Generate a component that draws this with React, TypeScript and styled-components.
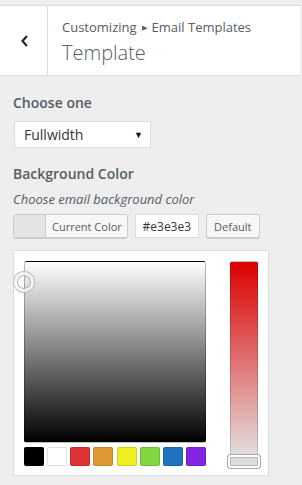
import styled, { createGlobalStyle } from 'styled-components';

const Global = createGlobalStyle`
  html, body {
    margin: 0;
    padding: 0;
    background: #eeeeee;
    font-family: "Open Sans", "Noto Sans", sans-serif;
    color: #555d66;
  }
`;

const Panel = styled.div`
  position: relative;
  width: 300px;
  height: 485px;
  overflow: hidden;
`;

const ScrollThumb = styled.div`
  position: absolute;
  top: 30px;
  left: 301px;
  width: 1px;
  height: 100px;
  background: #555;
`;

const Header = styled.header`
  margin-top: 5px;
  display: flex;
  height: 69px;
  background: #fff;
  border-top: 1px solid #dddddd;
  border-bottom: 1px solid #dddddd;
`;

const BackButton = styled.button`
  width: 48px;
  flex: none;
  display: flex;
  align-items: center;
  justify-content: center;
  padding: 0 0 0 2px;
  background: #fff;
  border: 0;
  border-right: 1px solid #dddddd;
  color: #23282d;
`;

const TitleBlock = styled.div`
  display: flex;
  flex-direction: column;
  padding: 11px 0 0 14px;
`;

const Crumbs = styled.span`
  font-size: 13px;
  line-height: 20px;
  color: #555d66;
  .sep {
    font-size: 7px;
    vertical-align: 2px;
    margin: 0 5px 0 5px;
  }
`;

const Title = styled.h1`
  margin: 0;
  font-size: 20px;
  font-weight: 300;
  line-height: 30px;
  color: #555d66;
`;

const Content = styled.div`
  padding: 17px 13px 0 13px;
`;

const Label = styled.div`
  font-size: 14px;
  font-weight: 600;
  line-height: 20px;
  color: #555d66;
`;

const Select = styled.div`
  margin: 8px 0 0 1px;
  width: 137px;
  height: 27px;
  box-sizing: border-box;
  background: #fff;
  border: 1px solid #dddddd;
  display: flex;
  align-items: center;
  justify-content: space-between;
  padding: 0 7px 0 9px;
  font-size: 14px;
  color: #32373c;
  .arrow {
    font-size: 9px;
    color: #111;
  }
`;

const Section = styled.div`
  margin-top: 16px;
`;

const Description = styled.div`
  margin-top: 6px;
  font-size: 13px;
  font-style: italic;
  line-height: 18px;
  color: #555d66;
`;

const ControlRow = styled.div`
  margin-top: 6px;
  display: flex;
  gap: 7px;
  height: 24px;
`;

const ColorResult = styled.div`
  display: flex;
  height: 24px;
  box-sizing: border-box;
  border: 1px solid #cccccc;
  border-radius: 3px;
  overflow: hidden;
  box-shadow: 0 1px 0 #cccccc;
`;

const Swatch = styled.span<{ $color: string }>`
  width: 31px;
  background: ${({ $color }) => $color};
  border-right: 1px solid #cccccc;
`;

const SmallButton = styled.span`
  display: flex;
  align-items: center;
  padding: 0 5px 0 6px;
  background: #f7f7f7;
  font-size: 11px;
  color: #555d66;
`;

const HexInput = styled.div`
  width: 64px;
  box-sizing: border-box;
  background: #fff;
  border: 1px solid #dddddd;
  display: flex;
  align-items: center;
  justify-content: center;
  font-size: 12px;
  color: #32373c;
`;

const DefaultButton = styled.div`
  width: 54px;
  box-sizing: border-box;
  border: 1px solid #cccccc;
  border-radius: 3px;
  background: #f7f7f7;
  box-shadow: 0 1px 0 #cccccc;
  display: flex;
  align-items: center;
  justify-content: center;
  font-size: 11px;
  color: #555d66;
`;

const Picker = styled.div`
  margin-top: 12px;
  width: 256px;
  height: 226px;
  box-sizing: border-box;
  background: #fff;
  border: 1px solid #dddddd;
  padding: 10px 10px 0 10px;
  display: flex;
  gap: 24px;
`;

const PickerLeft = styled.div`
  display: flex;
  flex-direction: column;
  gap: 4px;
`;

const Square = styled.div`
  position: relative;
  width: 182px;
  height: 182px;
  box-sizing: border-box;
  border-radius: 3px;
  border: 1px solid rgba(0, 0, 0, 0.25);
  background: linear-gradient(to bottom, #ffffff, #000000);
`;

const Handle = styled.span`
  position: absolute;
  left: -11px;
  top: 10px;
  width: 14px;
  height: 14px;
  border-radius: 50%;
  border: 3px solid rgba(245, 245, 245, 0.85);
  box-shadow: 0 0 0 1px #bbbbbb, inset 0 0 0 1px #aaaaaa;
`;

const Palette = styled.div`
  display: flex;
  justify-content: space-between;
`;

const PaletteSwatch = styled.span<{ $color: string }>`
  width: 20px;
  height: 19px;
  box-sizing: border-box;
  border-radius: 2px;
  background: ${({ $color }) => $color};
  box-shadow: inset 0 0 0 1px rgba(0, 0, 0, 0.12);
`;

const Slider = styled.div`
  position: relative;
  width: 28px;
  height: 200px;
  box-sizing: border-box;
  border-radius: 3px;
  border: 1px solid rgba(0, 0, 0, 0.15);
  background: linear-gradient(to bottom, #dd0000, #e3e3e3);
`;

const SliderHandle = styled.span`
  position: absolute;
  left: -3px;
  bottom: -8px;
  width: 32px;
  height: 13px;
  box-sizing: border-box;
  border-radius: 3px;
  border: 2px solid #fff;
  background: #dcdcdc;
  box-shadow: 0 0 0 1px #aaaaaa, inset 0 0 0 1px #b4b4b4;
`;

const palette = ['#000000', '#ffffff', '#dd3333', '#dd9933', '#eeee22', '#81d742', '#1e73be', '#8224e3'];

export default function App() {
  return (
    <Panel>
      <Global />
      <Header>
        <BackButton aria-label="Back">
          <svg width="10" height="14" viewBox="0 0 10 14">
            <path d="M7 2 L2.5 7 L7 12" fill="none" stroke="#23282d" strokeWidth="2.2" />
          </svg>
        </BackButton>
        <TitleBlock>
          <Crumbs>
            Customizing<span className="sep">▶</span>Email Templates
          </Crumbs>
          <Title>Template</Title>
        </TitleBlock>
      </Header>
      <Content>
        <Label>Choose one</Label>
        <Select>
          <span>Fullwidth</span>
          <span className="arrow">▼</span>
        </Select>
        <Section>
          <Label>Background Color</Label>
          <Description>Choose email background color</Description>
          <ControlRow>
            <ColorResult>
              <Swatch $color="#e3e3e3" />
              <SmallButton>Current Color</SmallButton>
            </ColorResult>
            <HexInput>#e3e3e3</HexInput>
            <DefaultButton>Default</DefaultButton>
          </ControlRow>
          <Picker>
            <PickerLeft>
              <Square>
                <Handle />
              </Square>
              <Palette>
                {palette.map((c) => (
                  <PaletteSwatch key={c} $color={c} />
                ))}
              </Palette>
            </PickerLeft>
            <Slider>
              <SliderHandle />
            </Slider>
          </Picker>
        </Section>
      </Content>
      <ScrollThumb />
    </Panel>
  );
}
